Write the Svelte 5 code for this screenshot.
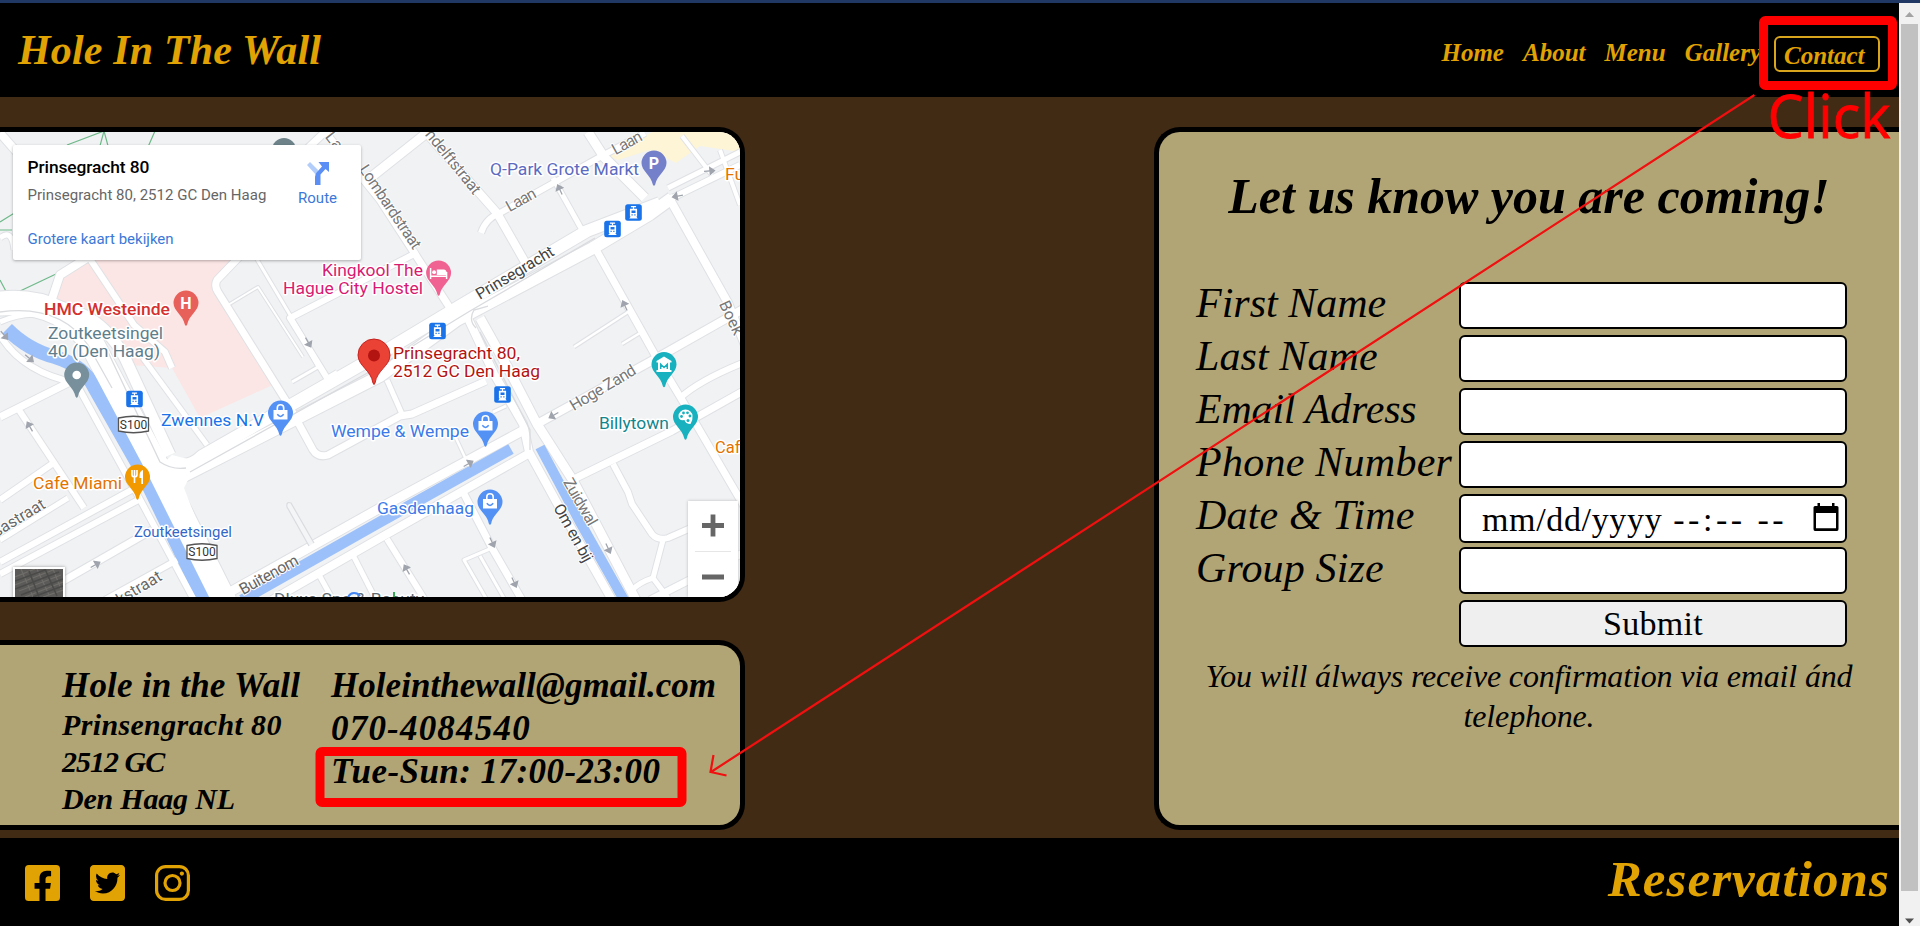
<script>
  const nav = ['Home', 'About', 'Menu', 'Gallery'];

  const fields = [
    { label: 'First Name', type: 'text', spacing: 0 },
    { label: 'Last Name', type: 'text', spacing: 0.1 },
    { label: 'Email Adress', type: 'text', spacing: -0.2 },
    { label: 'Phone Number', type: 'text', spacing: 0.25 },
    { label: 'Date & Time', type: 'date', spacing: 0.15 },
    { label: 'Group Size', type: 'text', spacing: 0.15 }
  ];

  // Streets: path and width of the white carriageway
  const streets = [
    ['M0 417 L72 381', 7], ['M17 407 L84 508', 6], ['M0 500 L52 464', 6], ['M0 540 L68 498', 5],
    ['M0 562 L137 487', 6], ['M0 574 L142 498', 6], ['M30 600 L152 530', 7], ['M105 600 L177 560', 6],
    ['M0 335 Q22 372 76 383 L143 505 L194 600', 6],
    ['M143 358 L207 445', 5], ['M0 133 L22 158', 8], ['M0 238 Q12 228 14 250', 5],
    ['M50 305 L60 275 L90 256', 8], ['M88 256 L134 325 L165 352 L172 368', 6],
    ['M240 256 L217 280 Q214 286 218 292 L288 404 L313 450 Q318 458 328 455 L400 416 L412 414 L486 381', 7],
    ['M387 380 L402 414', 5], ['M255 256 L318 362', 3], ['M228 305 L258 287 L303 357', 2],
    ['M292 382 L318 367 L296 327', 3],
    ['M327 378 L290 318 L418 252', 6], ['M327 378 L337 372', 4],
    ['M325 132 L380 200 L450 308', 7], ['M325 132 L290 165', 7], ['M428 132 L370 178', 9],
    ['M422 128 L497 213 L525 262', 8], ['M481 233 Q486 218 500 213 L600 157 L645 133', 6],
    ['M553 178 L582 230', 5], ['M588 132 L604 157 L645 198', 9],
    ['M668 188 L740 152', 5], ['M668 200 L740 165', 6], ['M682 136 L712 175', 4], ['M720 150 L740 205', 4],
    ['M594 246 L655 355 L682 400 L745 508', 7], ['M668 196 L728 303 L745 345', 8],
    ['M537 424 L655 359 L745 308', 8], ['M576 478 L672 431 L745 390', 7], ['M680 398 Q700 380 745 362', 6],
    ['M613 464 L628 492 L632 504 L652 534 Q658 541 668 538 L700 524', 6],
    ['M663 540 L653 578 Q640 582 632 590 M653 578 L668 598', 5],
    ['M574 347 L628 312', 2.5], ['M622 344 L640 333', 2.5],
    ['M463 492 L492 548 L522 600', 7], ['M387 539 L425 600', 6], ['M318 573 L333 600', 5],
    ['M353 555 L376 600', 5], ['M487 600 L464 560 L492 548 M480 556 L505 600', 3],
    ['M455 436 L469 466', 2.5], ['M493 412 L506 406', 3], ['M650 600 L745 552', 7],
    ['M230 592 L380 508 L524 430', 9], ['M272 600 L380 538 L528 454', 8],
    ['M465 312 L494 374 L523 424 L529 452 L557 503 L612 600', 8],
    ['M480 318 L508 368 L537 424 L574 482 L636 600', 9],
    ['M0 322 Q50 300 82 340', 5]
  ];

  const mainRoads = [
    ['M-5 304 Q60 296 92 344 L158 468 L225 602', 24],
    ['M40 305 Q98 306 125 358 L170 455', 11],
    ['M176 464 Q190 468 202 456 L380 354 L460 306 L587 231 L660 203', 12],
    ['M172 482 L380 376 L457 320 L593 248 L650 214 L672 198', 12]
  ];

  const labels = [
    ['Q-Park Grote Markt', 490, 175, 149, '#5c6bc0', 17.2],
    ['Kingkool The', 322, 276, 101, '#d81b72', 17.2],
    ['Hague City Hostel', 283, 293.5, 140, '#d81b72', 17.2],
    ['HMC Westeinde', 44, 315, 126, '#d3302f', 17.2, 500],
    ['Zoutkeetsingel', 48, 339, 115, '#607d8b', 17.2],
    ['40 (Den Haag)', 48, 356.5, 112, '#607d8b', 17.2],
    ['Prinsegracht 80,', 393, 359, 127, '#b31412', 17.2],
    ['2512 GC Den Haag', 393, 377, 147, '#b31412', 17.2],
    ['Zwennes N.V', 161, 425.5, 103, '#1a73e8', 17.2],
    ['Wempe & Wempe', 331, 437, 138, '#3b7ae8', 17.2],
    ['Gasdenhaag', 377, 514, 97, '#3b7ae8', 17.2],
    ['Billytown', 599, 429, 70, '#12858d', 17.2],
    ['Cafe Miami', 33, 489, 89, '#e37400', 17.2],
    ['Café', 715, 453, 34, '#e37400', 17.2],
    ['Fun', 725, 180, 29, '#e37400', 17.2],
    ['Zoutkeetsingel', 134, 537, 98, '#3367c8', 15],
    ['Dluxe Spa & Beauty', 274, 605, 150, '#5f6b70', 17]
  ];

  // Street names: text, centre x, centre y, angle, length, colour
  const names = [
    ['Buitenom', 269, 575, -29, 65, '#666'],
    ['Hoge Zand', 603, 388, -31, 74, '#777'],
    ['Prinsegracht', 515, 273, -31, 88, '#444'],
    ['Laan', 521, 200, -29, 32, '#777'],
    ['Laan', 627, 143, -29, 32, '#777'],
    ['ndelftstraat', 453, 162, 51, 78, '#777'],
    ['Lombardstraat', 390, 207, 56, 98, '#777'],
    ['La', 334, 141, 52, 18, '#777'],
    ['Zuidwal', 580, 502, 60, 52, '#777'],
    ['Om en bij', 573, 533, 61, 64, '#444'],
    ['Boek', 731, 318, 65, 36, '#777'],
    ['sastraat', 19, 518, -31, 58, '#666'],
    ['kstraat', 139, 588, -31, 50, '#666']
  ];

  const pins = [
    [654, 163, '#7580cb', 'P'], [438.6, 273, '#f06292', 'bed'], [186, 303, '#e8605a', 'H'],
    [76.7, 375, '#78909c', 'dot'], [280.5, 413, '#5491f5', 'bag'], [485.5, 424, '#5491f5', 'bag'],
    [490, 502, '#5491f5', 'bag'], [137.5, 477, '#f29900', 'food'], [664, 364.5, '#17b1bf', 'museum'],
    [685.5, 417, '#17b1bf', 'art']
  ];

  const trams = [[633.5, 212.5], [612.5, 229], [437.5, 331], [502.5, 394.5], [134.5, 399]];
  const shields = [[133.5, 424.5], [202, 552]];
  const arrows = [
    [560, 190, -25], [709, 171, 85], [678, 196, 260], [625, 306, -25], [554, 415, 240], [468, 464, 60],
    [492, 542, 155], [514, 582, 155], [608, 548, 155], [407, 570, -30], [30, 427, -30], [95, 565, 60],
    [308, 342, 150], [4, 335, 140], [29, 358, 130]
  ];
</script>

{#snippet glyph(kind)}
  {#if kind === 'P' || kind === 'H'}
    <text class="pin-letter" y="6" text-anchor="middle">{kind}</text>
  {:else if kind === 'dot'}
    <circle r="4.3" fill="#fff" />
  {:else if kind === 'bag'}
    <path d="M-7 -3H7V6.5H-7Z" fill="#fff" />
    <path d="M-3.2 -2V-5A3.2 3.2 0 0 1 3.2 -5V-2" fill="none" stroke="#fff" stroke-width="1.6" />
    <path d="M-3.2 1.3Q0 5.5 3.2 1.3" fill="none" stroke="#5491f5" stroke-width="1.5" />
  {:else if kind === 'bed'}
    <path d="M-8 -5V6M-8 3.2H8M8 6V-1" fill="none" stroke="#fff" stroke-width="1.5" />
    <circle cx="-4.5" cy="-.8" r="1.9" fill="#fff" />
    <path d="M-1.8 2V-3.5H5Q8 -3.5 8 0V2Z" fill="#fff" />
  {:else if kind === 'food'}
    <path d="M-5.5 -7V-2.5Q-5.5 0 -3 0Q-.5 0 -.5 -2.5V-7M-3 -7V6" fill="none" stroke="#fff" stroke-width="1.6" />
    <path d="M5.5 -7Q2 -6 2 -1V1H3.8V7H5.5Z" fill="#fff" />
  {:else if kind === 'museum'}
    <path d="M-7.5 -3.5L0 -8L7.5 -3.5V-2H-7.5ZM-6 -2H6V6H-6ZM-7.5 5.5H7.5V7.5H-7.5Z" fill="#fff" />
    <path d="M-3.3 4.5V-.3L0 3L3.3 -.3V4.5" fill="none" stroke="#17b1bf" stroke-width="1.5" />
  {:else}
    <path d="M-7 -1A7 6.5 0 0 1 7 -1Q7.5 3 5 7Q0 7 -1 3Q-7 4 -7 -1Z" fill="#fff" />
    <g fill="#17b1bf">
      <circle cx="-4" cy="-.5" r="1.4" /><circle cx="-2" cy="-4" r="1.4" />
      <circle cx="2" cy="-4.2" r="1.4" /><circle cx="4.4" cy="-1" r="1.4" />
      <circle cx="2.5" cy="3.5" r="1.5" />
    </g>
  {/if}
{/snippet}

<div class="window">
  <div class="page">
    <header>
      <h1>Hole In The Wall</h1>
      <nav>
        {#each nav as item}<a href="#{item}">{item}</a>{/each}
        <a class="active" href="#Contact">Contact</a>
      </nav>
    </header>

    <main>
      <div class="left">
        <section class="card map">
          <svg viewBox="0 132 740 465" width="740" height="465">
            <rect y="132" width="740" height="465" fill="#f0f2f4" />
            <path d="M52 300L60 278L92 256H240L215 284L275 384L200 418L172 368L130 365L90 326Z" fill="#fce6e5" />
            <path d="M608 156L652 132H740V152L700 146L676 163L650 150L618 160Z" fill="#fdf5d6" />
            <g fill="none" stroke="#6fb98a" stroke-width="1.2">
              <path d="M67 145L104 131L97 157M104 131L111 157M155 131L148 147M0 222L16 212M0 230H12M0 280L9 297L18 292L56 274" />
            </g>
            <g fill="none" stroke-linejoin="round" stroke="#dfe1e4">
              {#each [...streets, ...mainRoads] as [d, w]}<path {d} stroke-width={w + 2} />{/each}
            </g>
            <g fill="none" stroke="#9cc0f9">
              <path d="M7 329Q28 350 55 357Q84 366 94 387L140 468L204 600" stroke-width="14" />
              <path d="M242 600L380 522L511 449" stroke-width="11" />
              <path d="M540 447L580 522L624 600" stroke-width="10" />
            </g>
            <g fill="none" stroke-linejoin="round" stroke="#fff">
              {#each [...streets, ...mainRoads] as [d, w]}<path {d} stroke-width={w} />{/each}
            </g>
            <path d="M309 546L287 507Q286 501 291 503L314 543" fill="#f4f5f7" stroke="#dadcdf" stroke-width="1.2" />
            <path d="M158 468L172 455L200 462L188 480L184 488L212 560L175 510Z" fill="#fff" />
            <g fill="none" stroke="#d9dbde" stroke-width="1.3">
              <path d="M190 472L380 366L470 311L595 238M108 352L160 462Q172 470 186 468M0 312Q60 304 88 345L112 388M476 328Q468 320 474 310L488 306M480 332L530 430V450" />
            </g>
            {#each arrows as [x, y, a]}
              <path class="arrow" transform="translate({x} {y}) rotate({a})" d="M0 5V-3M-3.5 -1L0 -5.5L3.5 -1Z" />
            {/each}
            {#each names as [t, x, y, a, len, color]}
              <text class="street" transform="translate({x} {y}) rotate({a})" y="5" text-anchor="middle" textLength={len} fill={color}>{t}</text>
            {/each}
            {#each trams as [x, y]}
              <g transform="translate({x} {y})">
                <rect x="-8.3" y="-8.3" width="16.6" height="16.6" rx="2.5" fill="#1a73e8" />
                <path d="M-2.6 -5.8H2.6M0 -5.8V-3.5" stroke="#fff" stroke-width="1.2" />
                <path d="M-3.6 -3.8H3.6V4H-3.6ZM-4.2 6L-2.8 4H2.8L4.2 6Z" fill="#fff" />
                <path d="M-2 -2H2V.4H-2ZM-2 1.8H-.8V3H-2ZM.8 1.8H2V3H.8Z" fill="#1a73e8" />
              </g>
            {/each}
            {#each shields as [x, y]}
              <g transform="translate({x} {y})">
                <path d="M-15 -6.5Q0 -10 15 -6.5V6.5Q0 10 -15 6.5Z" fill="#fff" stroke="#555" stroke-width="1.3" />
                <text class="shield" y="4.2" text-anchor="middle">S100</text>
              </g>
            {/each}
            <circle cx="284" cy="150" r="12" fill="#6d8389" />
            {#each pins as [x, y, color, kind]}
              <g transform="translate({x} {y})">
                <path d="M-12.5 0A12.5 12.5 0 0 1 12.5 0C12.5 8 3 12 1.2 21.5Q0 24 -1.2 21.5C-3 12 -12.5 8 -12.5 0Z" fill={color} />
                {@render glyph(kind)}
              </g>
            {/each}
            <path d="M358 355A16 16 0 0 1 390 355C390 366 377 370 375 383Q374 386 373 383C371 370 358 366 358 355Z" fill="#ea4335" stroke="#c5221f" stroke-width="1" />
            <circle cx="374" cy="355.5" r="6" fill="#b31412" />
            {#each labels as [t, x, y, len, color, size, weight]}
              <text class="place" {x} {y} textLength={len} lengthAdjust="spacingAndGlyphs" fill={color} font-size={size} font-weight={weight ?? 400}>{t}</text>
            {/each}
            <path d="M347 600Q349 593 354 593Q358 593 360 596" fill="none" stroke="#4285f4" stroke-width="2" />
            <path d="M394 592V600" stroke="#34a853" stroke-width="2" />
          </svg>

          <div class="info">
            <div>
              <strong>Prinsegracht 80</strong>
              <span class="address">Prinsegracht 80, 2512 GC Den Haag</span>
              <span class="link">Grotere kaart bekijken</span>
            </div>
            <div class="route">
              <svg viewBox="0 0 24 24" width="24" height="24">
                <path d="M1 4L4 1L12 9L11 15Z" fill="#b3cdfb" />
                <path d="M9 24V16Q9 13 11 11L16 5.5L12.5 1H23V11L19.5 8L14.5 13.5V24Z" fill="#5b8ff5" />
              </svg>
              <span>Route</span>
            </div>
          </div>

          <div class="satellite">
            <svg width="48" height="28" viewBox="0 0 48 28">
              <rect width="48" height="28" fill="#5b5a58" />
              <path d="M0 8L20 0M0 16L38 1M4 22L46 6M10 28L48 13M28 28L48 21M6 0L18 28M22 0L34 26M38 0L46 20" stroke="#6f6d69" stroke-width="1.2" />
              <path d="M0 12L30 1M0 20L44 3M6 26L48 10M18 28L48 17M14 2L24 28M30 0L42 27" stroke="#4a4a49" stroke-width="1.6" />
            </svg>
          </div>

          <div class="zoom">
            <svg width="50" height="96" viewBox="0 0 50 96">
              <path d="M14 24.5H36M25 13.5V35.5M14 76H36" stroke="#666" stroke-width="4.8" />
              <path d="M7 50.5H43" stroke="#e6e6e6" />
            </svg>
          </div>
        </section>

        <section class="card contact">
          <address>
            <b>Hole in the Wall</b>
            <span class="street-line">Prinsengracht 80</span>
            <span class="postcode">2512 GC</span>
            <span class="city">Den Haag NL</span>
          </address>
          <address>
            <b class="mail">Holeinthewall@gmail.com</b>
            <b class="phone">070-4084540</b>
            <b class="hours">Tue-Sun: 17:00-23:00</b>
          </address>
        </section>
      </div>

      <section class="card booking">
        <h2>Let us know you are coming!</h2>
        <form>
          {#each fields as f}
            <label for={f.label} style="letter-spacing: {f.spacing}px">{f.label}</label>
            {#if f.type === 'date'}
              <div class="field date" id={f.label}>
                <span>mm/dd/yyyy</span><span class="dashes">--:-- --</span>
                <svg width="26" height="28" viewBox="0 0 26 28">
                  <path d="M2 3H24Q25.5 3 25.5 4.5V26Q25.5 28 24 28H2Q.5 28 .5 26V4.5Q.5 3 2 3ZM3 10V25.3H23V10Z" fill-rule="evenodd" />
                  <path d="M4.5 0H7V4H4.5ZM19 0H21.5V4H19Z" />
                </svg>
              </div>
            {:else}
              <input class="field" id={f.label} type="text" />
            {/if}
          {/each}
          <span></span>
          <button class="field" type="button">Submit</button>
        </form>
        <p>You will álways receive confirmation via email ánd telephone.</p>
      </section>
    </main>

    <footer>
      <div class="social">
        <svg viewBox="0 32 448 448" width="35" height="36" preserveAspectRatio="none"><path d="M400 32H48A48 48 0 0 0 0 80v352a48 48 0 0 0 48 48h137.25V327.69h-63V256h63v-54.64c0-62.15 37-96.48 93.67-96.48 27.14 0 55.52 4.84 55.52 4.84v61h-31.27c-30.81 0-40.42 19.12-40.42 38.73V256h68.78l-11 71.69h-57.78V480H400a48 48 0 0 0 48-48V80a48 48 0 0 0-48-48z" /></svg>
        <svg viewBox="0 32 448 448" width="35" height="36" preserveAspectRatio="none"><path d="M400 32H48C21.5 32 0 53.5 0 80v352c0 26.5 21.5 48 48 48h352c26.5 0 48-21.5 48-48V80c0-26.5-21.5-48-48-48zm-48.9 158.8c.2 2.8.2 5.7.2 8.5 0 86.7-66 186.6-186.6 186.6-37.2 0-71.7-10.8-100.7-29.4 5.3.6 10.4.8 15.8.8 30.7 0 58.9-10.4 81.4-28-28.8-.6-53-19.5-61.3-45.5 10.1 1.5 19.2 1.5 29.6-1.2-30-6.1-52.5-32.5-52.5-64.4v-.8c8.7 4.9 18.9 7.9 29.6 8.3a65.447 65.447 0 0 1-29.2-54.6c0-12.2 3.2-23.4 8.9-33.1 32.3 39.8 80.8 65.8 135.2 68.6-9.3-44.5 24-80.6 64-80.6 18.9 0 35.9 7.9 47.9 20.7 14.8-2.8 29-8.3 41.6-15.8-4.9 15.2-15.2 28-28.8 36.1 13.2-1.4 26-5.1 37.8-10.2-8.9 13.1-20.1 24.7-32.9 34z" /></svg>
        <svg viewBox="0 0 35 36" width="35" height="36">
          <rect x="1.6" y="1.6" width="31.8" height="32.8" rx="9" fill="none" stroke="#e1a204" stroke-width="3.2" />
          <circle cx="17.5" cy="18" r="7.5" fill="none" stroke="#e1a204" stroke-width="3.2" />
          <circle cx="26.9" cy="8.6" r="2.1" />
        </svg>
      </div>
      <h2>Reservations</h2>
    </footer>
  </div>

  <div class="scrollbar">
    <svg width="21" height="21" viewBox="0 0 21 21"><path d="M6 14L10.5 9L15 14Z" fill="#a3a3a3" /></svg>
    <div class="thumb"></div>
    <svg width="21" height="18" viewBox="0 0 21 18"><path d="M6 10.5L10.5 15.5L15 10.5Z" fill="#505050" /></svg>
  </div>

  <svg class="notes" width="1920" height="926" viewBox="0 0 1920 926">
    <path d="M1754.5 95L711 772M713.5 755L710.5 772L726.5 775.5" fill="none" stroke="#f01010" stroke-width="2.2" />
    <rect x="1763.5" y="20.5" width="129" height="65" rx="2" fill="none" stroke="#f00" stroke-width="9" stroke-linejoin="round" />
    <rect x="320" y="751.5" width="362" height="51" rx="2" fill="none" stroke="#f00" stroke-width="9" />
    <text x="1767.5" y="137.5" textLength="123" lengthAdjust="spacingAndGlyphs" font-size="60" fill="#f00" stroke="#f00" stroke-width=".8">Click</text>
  </svg>
</div>

<style>
  :global(body) { background: #412b14; overflow: hidden; }
  .window {
    position: relative;
    display: flex;
    width: 1920px;
    height: 926px;
    box-sizing: border-box;
    border-top: 3px solid #1f3864;
    font-family: "Liberation Serif", serif;
    overflow: hidden;
  }
  .page { display: flex; flex-direction: column; width: 1899px; }
  h1, h2, p { margin: 0; font-style: italic; }
  header {
    display: flex;
    justify-content: space-between;
    height: 94px;
    padding: 0 19px 0 18px;
    background: #000;
    color: #e1a204;
  }
  h1 { font-size: 42px; line-height: 95px; letter-spacing: 0.15px; }
  nav { display: flex; align-items: center; gap: 19px; padding-top: 5px; }
  nav a {
    color: #e1a204;
    font-size: 25px;
    font-style: italic;
    font-weight: 700;
    line-height: 30px;
    text-decoration: none;
  }
  nav .active {
    box-sizing: border-box;
    width: 106px;
    height: 36px;
    margin: 2px 0 0 -6px;
    padding: 3px 0 0 8px;
    border: 2px solid #d9a51c;
    border-radius: 6px;
    line-height: 29px;
  }
  main {
    display: flex;
    justify-content: space-between;
    height: 741px;
    box-sizing: border-box;
    padding: 30px 0 8px;
    background: #412b14;
  }
  .left { display: flex; flex-direction: column; justify-content: space-between; }
  .card {
    position: relative;
    box-sizing: border-box;
    width: 745px;
    border: 5px solid #000;
    background: #b2a575;
    overflow: hidden;
  }
  .left .card { border-left: 0; border-radius: 0 26px 26px 0; }
  .map { height: 475px; font-family: Roboto, sans-serif; }
  .map svg { display: block; }
  .place, .street { paint-order: stroke; stroke: #fff; stroke-width: 3px; stroke-linejoin: round; }
  .street { font-size: 16px; stroke-width: 2px; }
  .shield { font-size: 12px; fill: #333; }
  .pin-letter { font-size: 16px; font-weight: 700; fill: #fff; }
  .arrow { fill: #a0a4ad; stroke: #a0a4ad; stroke-width: 1.3px; }
  .info {
    position: absolute;
    left: 13px;
    top: 13px;
    display: flex;
    justify-content: space-between;
    box-sizing: border-box;
    width: 348px;
    height: 115px;
    padding: 12px 24px 0 14.5px;
    border-radius: 2px;
    background: #fff;
    box-shadow: 0 1px 3px rgba(0, 0, 0, 0.3);
    font-size: 15px;
  }
  .info div { display: flex; flex-direction: column; }
  .info strong { font-size: 17.4px; font-weight: 500; line-height: 20px; letter-spacing: -0.1px; }
  .address { margin-top: 8px; line-height: 20px; color: #666; letter-spacing: 0.02px; }
  .link { margin-top: 24px; line-height: 20px; color: #3c78d8; }
  .info .route { align-items: center; margin-top: 4px; color: #3c78d8; line-height: 20px; gap: 3px; }
  .satellite { position: absolute; left: 13px; top: 435px; border: 2px solid #fff; box-shadow: 0 0 3px #999; }
  .zoom { position: absolute; left: 688px; top: 369px; background: #fff; box-shadow: 0 0 3px #bbb; }
  .contact { display: flex; height: 190px; padding: 19px 0 0 62px; }
  address { display: flex; flex-direction: column; width: 269px; font-weight: 700; font-size: 30px; line-height: 37px; white-space: nowrap; }
  address b { font-size: 35px; line-height: 43px; letter-spacing: 0.2px; }
  address span { position: relative; top: -1px; }
  .street-line { letter-spacing: 0.35px; }
  .postcode { letter-spacing: -1px; }
  .city { letter-spacing: -0.2px; }
  address .mail { letter-spacing: 0.05px; }
  address .phone { letter-spacing: 1.2px; }
  address .hours { letter-spacing: 0.45px; }
  .booking { height: 703px; border-right: 0; border-radius: 26px 0 0 26px; padding-top: 34px; text-align: center; }
  .booking h2 { font-size: 50px; line-height: 60px; }
  form {
    display: grid;
    grid-template-columns: 263px 388px;
    grid-auto-rows: 53px;
    margin: 56px 0 0 37px;
    text-align: left;
  }
  label { font-size: 42px; font-style: italic; line-height: 42px; white-space: nowrap; }
  .field {
    display: block;
    box-sizing: border-box;
    width: 388px;
    height: 47px;
    margin: 0;
    padding: 0;
    border: 2px solid #000;
    border-radius: 6px;
    background: #fff;
    font-family: inherit;
    font-size: 34px;
    line-height: 43px;
  }
  .date { display: flex; height: 49px; padding: 2px 6px 0 21px; letter-spacing: 0.65px; }
  .dashes { margin-left: 11px; letter-spacing: 3.5px; }
  .date svg { margin: 5px 0 0 auto; }
  button.field { background: #efefef; color: #000; line-height: 43px; letter-spacing: 0.3px; }
  p { margin: 3px auto 0; width: 670px; font-size: 32px; line-height: 40px; letter-spacing: -0.15px; }
  footer {
    display: flex;
    justify-content: space-between;
    flex: 1;
    padding: 0 9px 0 25px;
    background: #000;
    color: #e1a204;
  }
  .social { display: flex; gap: 30px; padding-top: 27px; }
  .social svg { display: block; fill: #e1a204; }
  footer h2 { font-size: 51px; line-height: 82px; letter-spacing: 1.1px; }
  .scrollbar { display: flex; flex-direction: column; width: 21px; background: #f1f1f1; }
  .scrollbar svg { display: block; }
  .thumb { flex: 1; max-height: 867px; margin: 0 2px; background: #c1c1c1; }
  .scrollbar svg:last-child { margin-top: auto; }
  .notes { position: absolute; left: 0; top: -3px; pointer-events: none; font-family: "Open Sans", sans-serif; }
</style>
